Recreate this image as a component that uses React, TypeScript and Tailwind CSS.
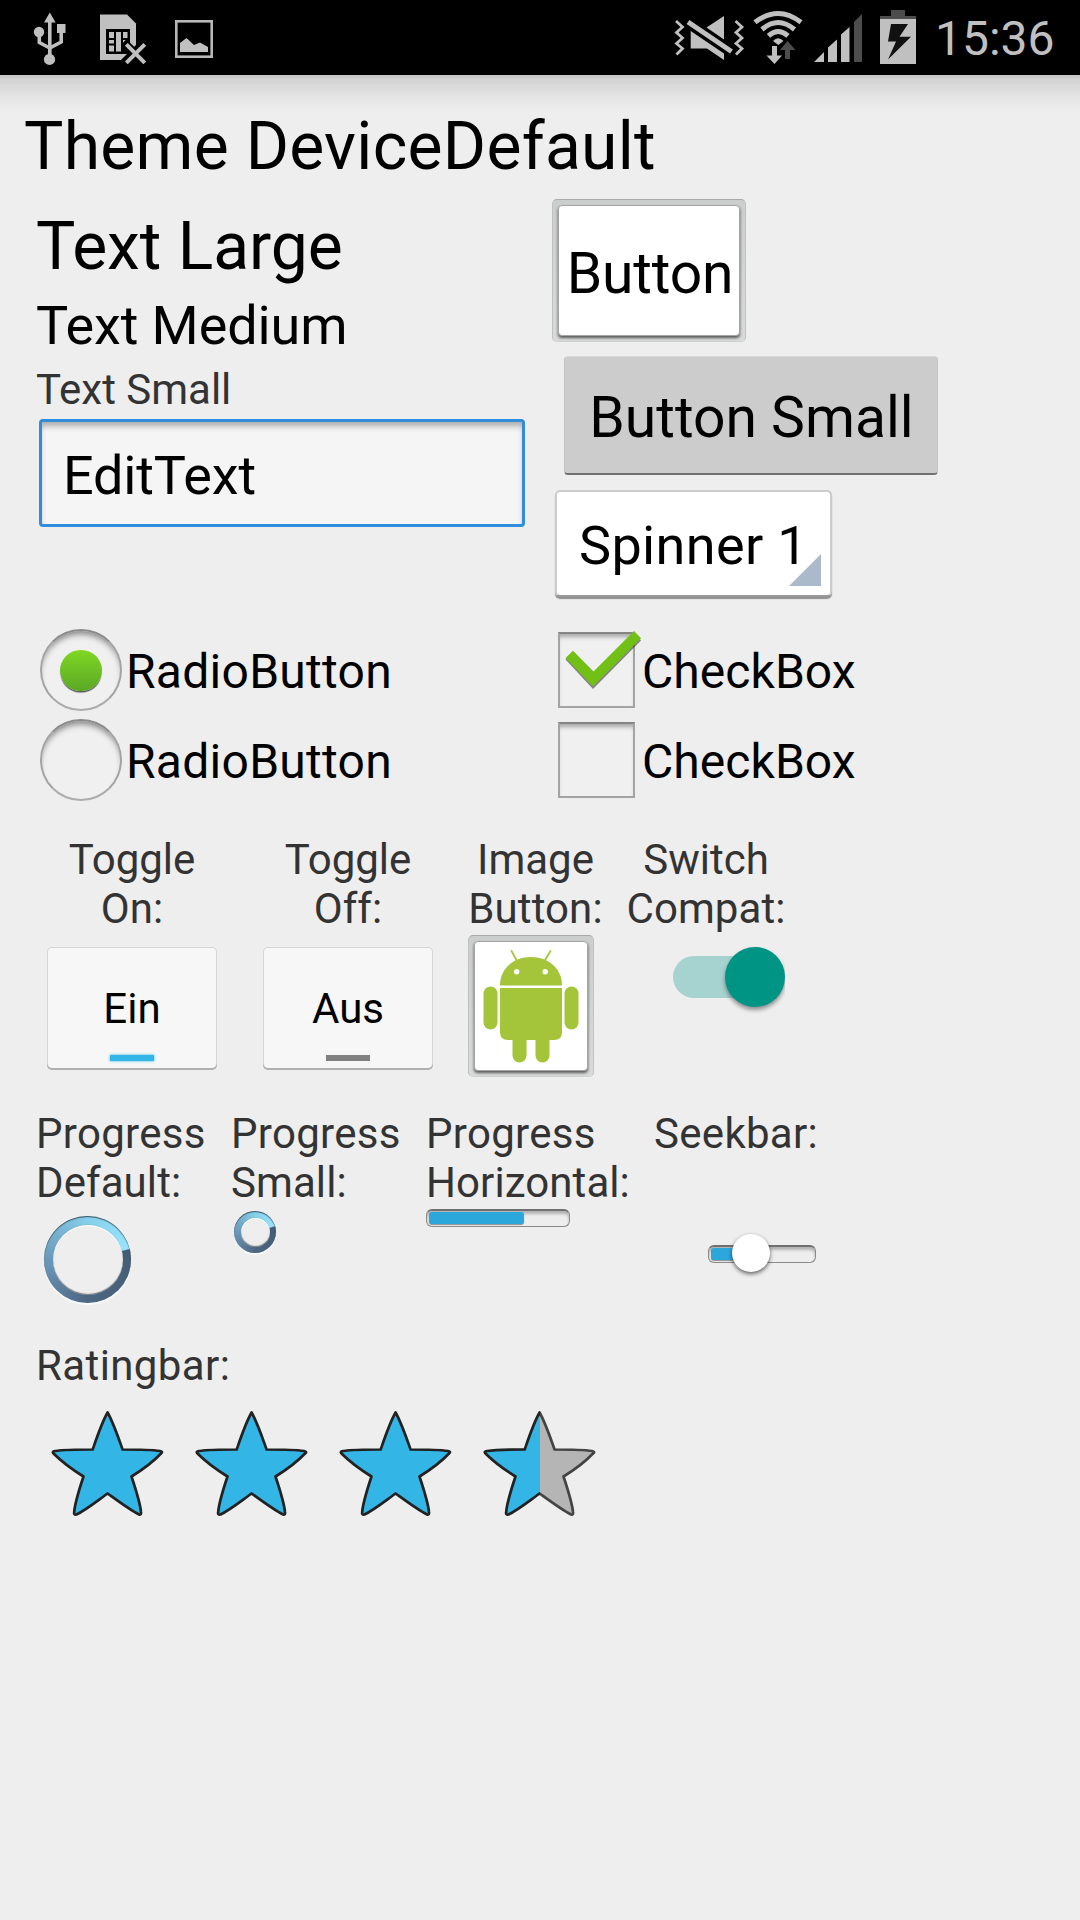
import React from "react";

const STAR =
  "M57.6 2.5 C63 12 67 24 72.6 39.5 C86 39.5 100 39.5 110 41 Q113.5 42 111 43.5 C103 52 92 60 81.5 66.5 C86 80 90 92 91 102 Q91.5 105 89 104.5 C80 100 68 91 57.6 83.5 C47 91 36 100 26.5 104.5 Q23.5 105 24.2 102 C25 92 29 80 33.5 66.5 C23 60 12 52 3.5 43.5 Q1.5 41.5 5 41 C15 39.5 29 39.5 42.7 39.5 C48 24 52 12 57.6 2.5 Z";

function StatusBar() {
  return (
    <header className="flex h-[75px] w-full items-start bg-black">
      <svg className="ml-[30px] h-[75px] w-[40px]" viewBox="30 0 40 75" fill="#c0c0c0">
        <path d="M49.8 12.5 L55.6 22.5 H44 Z" />
        <path d="M49.8 20 V57" stroke="#c0c0c0" strokeWidth="3.6" />
        <circle cx="49.5" cy="59.4" r="5.6" />
        <circle cx="39" cy="32" r="5.2" />
        <rect x="57" y="24" width="8.5" height="9" />
        <path d="M39.3 34 V42.5 L49.8 48 L61.2 42 V31" fill="none" stroke="#c0c0c0" strokeWidth="3.6" />
      </svg>
      <svg className="ml-[28px] h-[75px] w-[50px]" viewBox="98 0 50 75">
        <path d="M100 14.5 H127 L136 23.5 V45 L121 60 H100 Z" fill="#c0c0c0" />
        <rect x="106" y="29" width="24" height="25" fill="#000" />
        <g fill="#c0c0c0">
          <rect x="109" y="32" width="5" height="6" />
          <rect x="109" y="40" width="5" height="3.5" />
          <rect x="109" y="45.5" width="5" height="6" />
          <rect x="116" y="32" width="5" height="19.5" />
          <rect x="123" y="32" width="4.5" height="6" />
          <path d="M123 40 H126 L123 43 Z" />
        </g>
        <path d="M124 42 L146 64 M124 64 L146 42" stroke="#000" strokeWidth="7.5" />
        <path d="M126.3 44.3 L144.8 62.8 M126.3 62.8 L144.8 44.3" stroke="#c0c0c0" strokeWidth="4" />
      </svg>
      <svg className="ml-[25px] h-[75px] w-[42px]" viewBox="173 0 42 75">
        <rect x="176.3" y="21.3" width="35.4" height="35.4" fill="none" stroke="#b8b8b8" strokeWidth="2.6" />
        <path d="M180 52 V43 L186.5 38 L194 45 L200 42.5 L208 47 V52 Z" fill="#c0c0c0" />
      </svg>
      <svg className="ml-[457px] h-[75px] w-[76px]" viewBox="672 0 76 75" fill="#c0c0c0">
        <path d="M676 21 L682.5 27 L676.5 32.5 L682.5 38 L676.5 43.5 L682.5 48.5 L676.5 54.5" fill="none" stroke="#c0c0c0" strokeWidth="2.8" />
        <path d="M735.5 21 L742 27 L736 32.5 L742 38 L736 43.5 L742 48.5 L736 54.5" fill="none" stroke="#c0c0c0" strokeWidth="2.8" />
        <path d="M724 16 V39.5 L706.5 27.5 Z" />
        <path d="M690.7 31 L724 53.5 V60 L707 48.5 H690.7 Z" />
        <path d="M688 22 L731.5 51.5" stroke="#c0c0c0" strokeWidth="5" />
      </svg>
      <svg className="ml-[4px] h-[75px] w-[52px]" viewBox="752 0 52 75">
        <g fill="none" stroke="#c0c0c0" strokeWidth="5">
          <path d="M755 22.3 Q778 4.7 801 22.3" />
          <path d="M762 29.5 Q778 15.5 794.5 29.5" />
          <path d="M768.5 35.8 Q778 27.2 788 35.8" />
        </g>
        <path d="M773 41 Q778 35.5 783.5 41 L778.3 45 Z" fill="#c0c0c0" />
        <path d="M772 46 H777 V55.5 H782 L774.5 64 L766.5 55.5 H772 Z" fill="#c0c0c0" />
        <path d="M785 59 V50 H780 L787.5 41 L795.5 50 H790 V59 Z" fill="#4d4d4d" />
      </svg>
      <svg className="ml-[9px] h-[75px] w-[50px]" viewBox="813 0 50 75" fill="#c0c0c0">
        <path d="M814 62 L824 52 V62 Z M828 62 V47.5 L837 39.5 V62 Z M841 62 V34.5 L849.5 27 V62 Z" />
        <path d="M854 62 V22 L862 14 V62 Z" fill="#4d4d4d" />
      </svg>
      <svg className="ml-[17px] h-[75px] w-[36px]" viewBox="880 0 36 75">
        <path d="M880 19 V16 H891 V10 H905 V16 H916 V19 Z" fill="#4d4d4d" />
        <rect x="880" y="19" width="36" height="45" fill="#c0c0c0" />
        <path d="M891 24 H908 L899.5 36.7 H911 L888 59.5 L896 41.5 H888 Z" fill="#111" />
      </svg>
      <span className="mt-[10px] ml-[19px] text-[48px] leading-[57px] text-[#c0c0c0]">15:36</span>
    </header>
  );
}

function PressedFrame({ className, children }: { className: string; children: React.ReactNode }) {
  return (
    <div
      className={`rounded-[5px] border border-x-[#bfc1c1] border-t-[#a9abab] border-b-[#cfd0d0] bg-linear-to-b from-[#cccece] to-[#dadbdb] p-[5px] ${className}`}
    >
      <div className="flex h-full w-full items-center justify-center rounded-[4px] border border-[#a5a5a5] bg-white shadow-[0_2px_3px_rgba(0,0,0,0.6)]">
        {children}
      </div>
    </div>
  );
}

function Radio({ checked }: { checked?: boolean }) {
  return (
    <div className="flex h-[90px] items-center">
      <div className="flex size-[82px] items-center justify-center rounded-full border-2 border-x-[#a3a3a3] border-t-[#8a8a8a] border-b-[#adadad] bg-[#f0f0f0] shadow-[inset_0_6px_6px_-3px_rgba(0,0,0,0.45)]">
        {checked && (
          <div className="h-[41px] w-[42px] rounded-full bg-linear-to-b from-[#80d822] to-[#5aa824] shadow-[0_2px_1px_-0.5px_rgba(0,0,0,0.65)]" />
        )}
      </div>
      <span className="mt-[3px] ml-[4px] text-[48px] leading-[56px] tracking-[0.27px] whitespace-nowrap">RadioButton</span>
    </div>
  );
}

function Check({ checked }: { checked?: boolean }) {
  return (
    <div className="flex h-[90px] items-center">
      <div className="relative h-[76px] w-[77px] border-2 border-x-[#a3a3a3] border-t-[#858585] border-b-[#a3a3a3] bg-[#f0f0f0] shadow-[inset_0_5px_4px_-2px_rgba(0,0,0,0.3)]">
        {checked && (
          <svg className="absolute -top-[6px] -left-[2px] h-[76px] w-[88px]" viewBox="558 628 88 76">
            <path d="M565.5 659.5 L573 652 L593.5 673 L634 633 L641 640.5 L593 689 Z" fill="#000" opacity=".45" />
            <path d="M565.5 658 L573 650.7 L593.5 671.5 L634 631 L641 638.3 L593 686.5 Z" fill="#72c015" />
          </svg>
        )}
      </div>
      <span className="mt-[3px] ml-[7px] text-[48px] leading-[56px] tracking-[0.06px] whitespace-nowrap">CheckBox</span>
    </div>
  );
}

function Label({ lines, className = "" }: { lines: string[]; className?: string }) {
  return (
    <div className={`text-[42px] leading-[49px] whitespace-nowrap text-[#333] ${className}`}>
      {lines.map((l) => (
        <div key={l} className="last:not-first:tracking-[0.08px]">
          {l}
        </div>
      ))}
    </div>
  );
}

function Toggle({ label, text, on }: { label: string; text: string; on?: boolean }) {
  return (
    <div className="flex w-[192px] flex-col items-center">
      <Label lines={["Toggle", label]} className="text-center" />
      <div className="mt-[14px] flex h-[121px] w-[170px] flex-col items-center rounded-[5px] border border-[#d6d6d6] border-b-transparent bg-[#f7f7f7] shadow-[0_2px_0_#b0b0b0]">
        <span className="mt-[36px] text-[42px] leading-[49px]">{text}</span>
        {on ? (
          <div className="mt-[22px] h-[6px] w-[44px] bg-[#33b5e5] shadow-[0_0_3px_#33b5e5]" />
        ) : (
          <div className="mt-[22px] h-[6px] w-[44px] bg-[#7f7f7f]" />
        )}
      </div>
    </div>
  );
}

function Android() {
  return (
    <svg className="h-[128px] w-[112px]" viewBox="475 942 112 128" fill="#a4c439">
      <path d="M511.5 951 L517 961 M550.5 951 L544.5 961" stroke="#a4c439" strokeWidth="1.8" strokeLinecap="round" />
      <path d="M500 985.5 C500 968 514 957 531 957 C548 957 562 968 562 985.5 Z" />
      <circle cx="516.7" cy="971.7" r="2.7" fill="#fff" />
      <circle cx="545.2" cy="971.7" r="2.7" fill="#fff" />
      <path d="M500 988 H562 V1032 Q562 1040 554 1040 H508 Q500 1040 500 1032 Z" />
      <rect x="483.5" y="986.5" width="14" height="43" rx="7" />
      <rect x="564.5" y="986.5" width="14" height="43" rx="7" />
      <path d="M512.5 1036 H526.5 V1055.5 A7 7 0 0 1 512.5 1055.5 Z M535.5 1036 H549.5 V1055.5 A7 7 0 0 1 535.5 1055.5 Z" />
    </svg>
  );
}

function Ring({ size }: { size: "lg" | "sm" }) {
  const big = size === "lg";
  return (
    <div
      className={
        big
          ? "mt-[9px] ml-[8px] size-[87px] rounded-full bg-[conic-gradient(#86cfea_0deg,#98e4fd_75deg,#425d74_77deg,#4d6682_180deg,#6690b2_255deg,#86cfea_360deg)] shadow-[0_2px_1px_#f8fbff]"
          : "mt-[4px] ml-[3px] size-[42px] rounded-full bg-[conic-gradient(#86cfea_0deg,#98e4fd_72deg,#425d74_76deg,#4d6682_180deg,#6690b2_255deg,#86cfea_360deg)] shadow-[0_2px_1px_#f8fbff]"
      }
    >
      <div
        className={`size-full rounded-full shadow-[inset_0_1px_1px_rgba(0,0,0,0.6)] ${big ? "p-[8.5px]" : "p-[6.5px]"}`}
      >
        <div className="size-full rounded-full bg-[#eee] shadow-[0_-1px_1px_rgba(0,0,0,0.05),inset_0_1px_1px_#fff,inset_0_-1px_1px_rgba(0,0,0,0.5)]" />
      </div>
    </div>
  );
}

function Star({ half }: { half?: boolean }) {
  return (
    <svg className="h-[108px] w-[144px]" viewBox="-14 0 144 108">
      <defs>
        <linearGradient id="halfFill">
          <stop offset="50.5%" stopColor="#33b5e5" />
          <stop offset="50.5%" stopColor="#b5b5b5" />
        </linearGradient>
        <linearGradient id="halfLine">
          <stop offset="50.5%" stopColor="#222" />
          <stop offset="50.5%" stopColor="#444" />
        </linearGradient>
      </defs>
      <path
        d={STAR}
        fill={half ? "url(#halfFill)" : "#33b5e5"}
        stroke={half ? "url(#halfLine)" : "#222"}
        strokeWidth="2.7"
        strokeLinejoin="round"
      />
    </svg>
  );
}

export default function App() {
  return (
    <div className="flex h-[1920px] w-[1080px] flex-col overflow-hidden bg-[#eee] font-[Roboto,sans-serif] text-black">
      <StatusBar />
      <div className="h-[3px] w-full bg-[#c8c8c8]" />
      <div className="h-[34px] w-full bg-linear-to-b from-[#d0d0d0] via-[#e3e3e3] to-[#eee]" />
      <h1 className="-mt-[4px] ml-[24px] text-[66px] leading-[77px] tracking-[0.28px] whitespace-nowrap">
        Theme DeviceDefault
      </h1>

      <section className="mt-[14px] flex h-[426px]">
        <div className="ml-[36px] w-[516px] pt-[9px]">
          <p className="text-[66px] leading-[77px] tracking-[-0.05px]">Text Large</p>
          <p className="mt-[9px] text-[54px] leading-[63px] tracking-[-0.1px]">Text Medium</p>
          <p className="mt-[8px] text-[42px] leading-[49px] text-[#333]">Text Small</p>
          <div className="mt-[5px] ml-[3px] h-[108px] w-[486px] rounded-[4px] border-[3px] border-[#2f8ddb] bg-[#f5f5f5] pt-[22px] pl-[21px] text-[54px] leading-[63px] tracking-[-0.15px] shadow-[inset_0_6px_6px_-2px_rgba(0,0,0,0.3)]">
            EditText
          </div>
        </div>
        <div className="flex flex-col items-start">
          <PressedFrame className="h-[143px] w-[194px]">
            <span className="pt-[5px] pl-[2px] text-[57px] leading-[67px] tracking-[-0.2px]">Button</span>
          </PressedFrame>
          <div className="mt-[14px] ml-[12px] flex h-[119px] w-[374px] items-center justify-center rounded-[4px] border border-[#c4c4c4] border-t-[#d8d8d8] border-b-2 border-b-[#707070] bg-[#ccc] pt-[4px] pl-px text-[57px] leading-[67px] whitespace-nowrap">
            Button Small
          </div>
          <div className="relative mt-[15px] ml-[3px] h-[107px] w-[277px] rounded-[5px] border-2 border-[#ccc] border-b-[#999] bg-white pt-[22px] pl-[22px] text-[54px] leading-[63px] tracking-[0.35px] whitespace-nowrap shadow-[0_2px_1px_rgba(0,0,0,0.4)]">
            Spinner 1
            <svg className="absolute right-[9px] bottom-[9px] size-[32px]" viewBox="0 0 32 32">
              <path d="M32 0 V32 H0 Z" fill="#abbacb" />
            </svg>
          </div>
        </div>
      </section>

      <section className="flex">
        <div className="ml-[40px] w-[518px]">
          <Radio checked />
          <Radio />
        </div>
        <div>
          <Check checked />
          <Check />
        </div>
      </section>

      <section className="mt-[30px] ml-[36px] flex h-[274px] gap-[24px]">
        <Toggle label="On:" text="Ein" on />
        <Toggle label="Off:" text="Aus" />
        <div className="w-[136px]">
          <Label lines={["Image", "Button:"]} className="pr-px text-center" />
          <PressedFrame className="mt-[2px] h-[142px] w-[126px]">
            <Android />
          </PressedFrame>
        </div>
        <div className="-ml-[4px] flex w-[164px] flex-col">
          <Label lines={["Switch", "Compat:"]} className="text-center" />
          <div className="mt-[5px] ml-[49px] flex h-[77px] w-[112px] items-center overflow-hidden">
            <div className="h-[42px] w-[80px] shrink-0 rounded-l-full bg-[#a6d3cf]" />
            <div className="-ml-[28px] size-[60px] shrink-0 rounded-full bg-[#009485] shadow-[0_3px_4px_rgba(0,0,0,0.4)]" />
          </div>
        </div>
      </section>

      <section className="ml-[36px] flex h-[232px] tracking-[0.3px]">
        <div className="w-[195px]">
          <Label lines={["Progress", "Default:"]} />
          <Ring size="lg" />
        </div>
        <div className="w-[195px]">
          <Label lines={["Progress", "Small:"]} />
          <Ring size="sm" />
        </div>
        <div className="w-[228px]">
          <Label lines={["Progress", "Horizontal:"]} />
          <div className="mt-[2px] h-[18px] w-[144px] rounded-[6px] border border-t-2 border-[#8a8a8a] border-t-[#707070] p-[2px] pt-[1px] shadow-[inset_0_3px_3px_rgba(0,0,0,0.25)]">
            <div className="h-[12px] w-[95px] rounded-[3px] bg-[#2ca7db] shadow-[0_1px_1px_rgba(0,0,0,0.4)]" />
          </div>
        </div>
        <div>
          <Label lines={["Seekbar:"]} />
          <div className="relative mt-[87px] ml-[54px] h-[18px] w-[108px] rounded-[6px] border border-t-2 border-[#8a8a8a] border-t-[#707070] p-[2px] pt-[1px] shadow-[inset_0_3px_3px_rgba(0,0,0,0.25)]">
            <div className="h-[12px] w-[40px] rounded-[3px] bg-[#2ca7db] shadow-[0_1px_1px_rgba(0,0,0,0.4)]" />
            <div className="absolute -top-[13px] left-[23px] size-[38px] rounded-full bg-white shadow-[0_2px_4px_rgba(0,0,0,0.6)]" />
          </div>
        </div>
      </section>

      <section className="ml-[36px]">
        <Label lines={["Ratingbar:"]} className="tracking-[0.4px]" />
        <div className="mt-[20px] flex">
          <Star />
          <Star />
          <Star />
          <Star half />
        </div>
      </section>
    </div>
  );
}
